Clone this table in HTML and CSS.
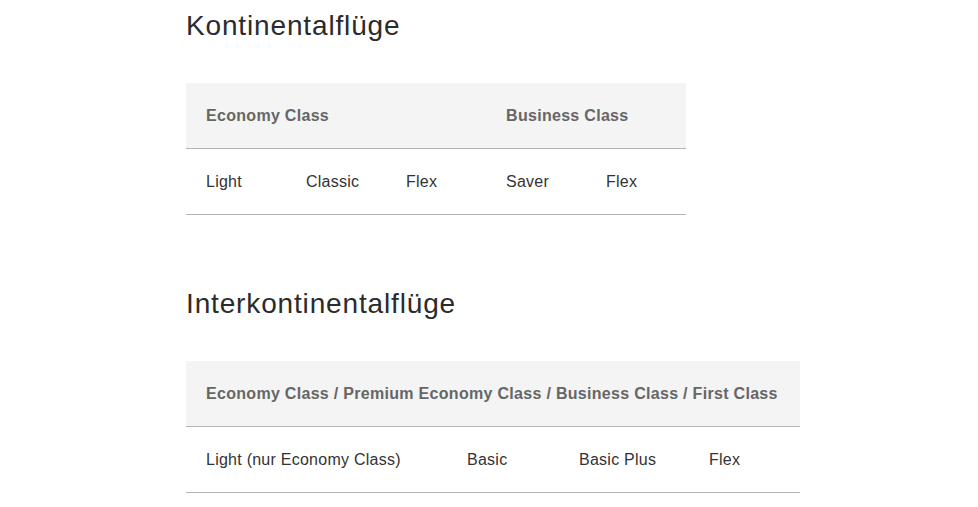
FILE: index.html
```html
<!DOCTYPE html>
<html lang="de">
<head>
<meta charset="utf-8">
<title>Tarife</title>
<link rel="stylesheet" href="styles.css">
</head>
<body>
<main class="page">
  <section class="fare-section">
    <h2 class="fare-title">Kontinentalflüge</h2>
    <table class="fare-table fare-table--continental">
      <colgroup>
        <col class="c100"><col class="c100"><col class="c100"><col class="c100"><col class="c100">
      </colgroup>
      <thead>
        <tr>
          <th colspan="3">Economy Class</th>
          <th colspan="2">Business Class</th>
        </tr>
      </thead>
      <tbody>
        <tr>
          <td>Light</td>
          <td>Classic</td>
          <td>Flex</td>
          <td>Saver</td>
          <td>Flex</td>
        </tr>
      </tbody>
    </table>
  </section>
  <section class="fare-section fare-section--second">
    <h2 class="fare-title">Interkontinentalflüge</h2>
    <table class="fare-table fare-table--intercontinental">
      <colgroup>
        <col class="c261"><col class="c112"><col class="c130"><col class="c111">
      </colgroup>
      <thead>
        <tr>
          <th colspan="4">Economy Class / Premium Economy Class / Business Class / First Class</th>
        </tr>
      </thead>
      <tbody>
        <tr>
          <td>Light (nur Economy Class)</td>
          <td>Basic</td>
          <td>Basic Plus</td>
          <td>Flex</td>
        </tr>
      </tbody>
    </table>
  </section>
</main>
</body>
</html>
```
FILE: styles.css
```css
html, body {
  margin: 0;
  padding: 0;
  background: #ffffff;
}

body {
  font-family: "Liberation Sans", Arial, sans-serif;
  color: #333333;
}

.page {
  padding: 8px 0 0 186px;
}

.fare-section--second {
  margin-top: 71px;
}

.fare-title {
  margin: 0 0 39px 0;
  font-size: 28px;
  line-height: 36px;
  font-weight: normal;
  color: #2b2b2b;
  letter-spacing: 0.85px;
}

.fare-table {
  border-collapse: collapse;
  table-layout: fixed;
}

.fare-table--continental {
  width: 500px;
}

.fare-table--intercontinental {
  width: 614px;
}

.fare-table th,
.fare-table td {
  padding: 20px 20px;
  line-height: 25px;
  font-size: 16px;
  text-align: left;
  border-bottom: 1px solid #b4b4b4;
  white-space: nowrap;
  overflow: visible;
}

.fare-table th {
  background: #f4f4f4;
  color: #666666;
  font-weight: bold;
  letter-spacing: 0.3px;
}

.fare-table td {
  color: #333333;
  font-weight: normal;
  letter-spacing: 0.25px;
}

.c100 { width: 100px; }
.c261 { width: 261px; }
.c112 { width: 112px; }
.c130 { width: 130px; }
.c111 { width: 111px; }
```
